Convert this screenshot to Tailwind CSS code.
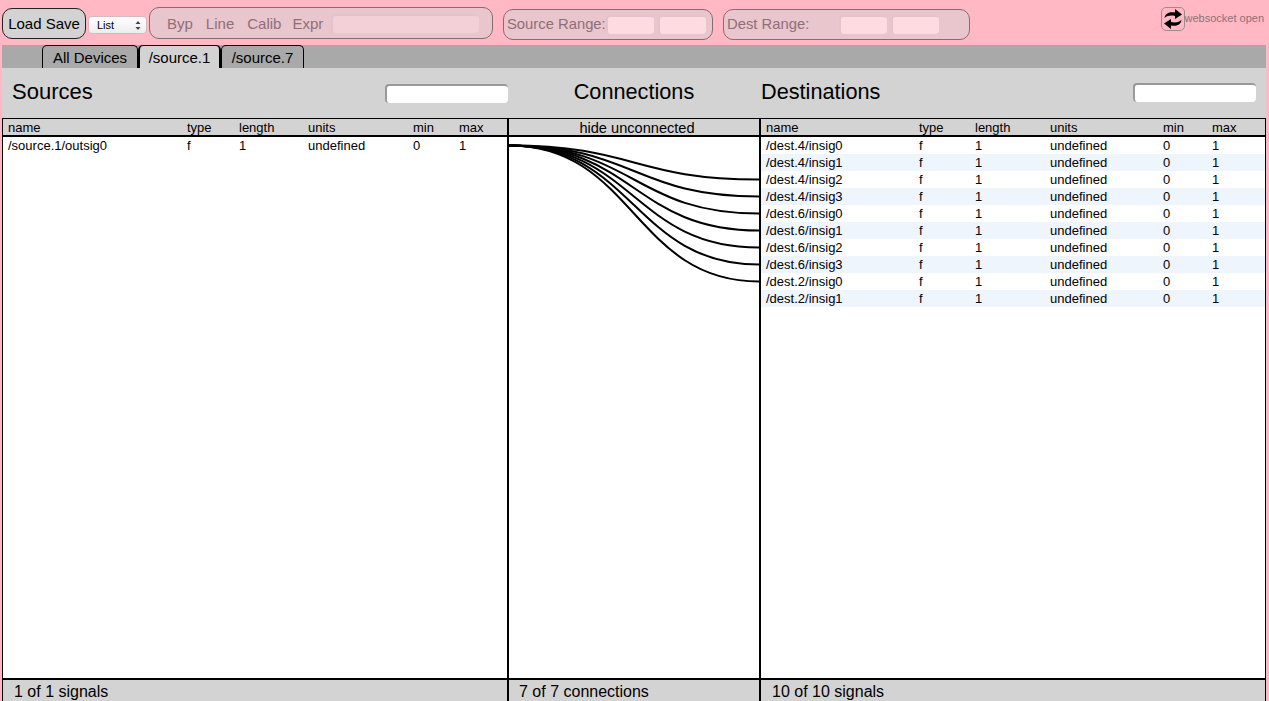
<!DOCTYPE html>
<html>
<head>
<meta charset="utf-8">
<script src="https://cdn.jsdelivr.net/npm/@tailwindcss/browser@4"></script>
</head>
<body class="h-[701px] overflow-hidden bg-[#ffb8c4] font-['Liberation_Sans',Arial,sans-serif] text-black">
<div class="flex h-[45px] items-start pl-[2px] relative">
  <div class="mt-[8px] flex h-[31px] w-[84px] items-center justify-center rounded-[10px] border border-[#222] bg-[#d3d3d3] pt-[1px] text-[15px]">Load Save</div>
  <div class="ml-[2px] mt-[16px] flex h-[18px] w-[59px] items-center justify-between rounded-[4px] border border-[#d9b9be] bg-gradient-to-b from-white to-[#eeeeee] pl-[8px] pr-[5px] text-[11px]">
    <span>List</span>
    <svg width="6" height="11" viewBox="0 0 6 11"><path d="M3 1 L5.5 4 H0.5 Z M3 10 L5.5 7 H0.5 Z" fill="#444"/></svg>
  </div>
  <div class="ml-[2px] mt-[7px] flex h-[32px] w-[344px] items-center rounded-[10px] border border-[#8a6a72] bg-[#e9c5cd] pl-[17px] text-[15px] text-[#8f6f78]">
    <span class="mt-[2px]">Byp</span><span class="ml-[13px] mt-[2px]">Line</span><span class="ml-[13px] mt-[2px]">Calib</span><span class="ml-[11px] mt-[2px]">Expr</span>
    <div class="ml-[8px] h-[19px] w-[148px] rounded-[4px] border-t-2 border-l-2 border-[#e6c3cb] bg-[#f3cfd7]"></div>
  </div>
  <div class="ml-[10px] mt-[9px] flex h-[31px] w-[210px] items-center rounded-[10px] border border-[#8a6a72] bg-[#e9c5cd] pl-[3px] text-[14.8px] text-[#8f6f78]">
    <span class="w-[99px]">Source Range:</span>
    <div class="h-[19px] w-[48px] rounded-[4px] border-t-2 border-l-2 border-[#e6c3cb] bg-[#fddbe1]"></div>
    <div class="ml-[4px] h-[19px] w-[48px] rounded-[4px] border-t-2 border-l-2 border-[#e6c3cb] bg-[#fddbe1]"></div>
  </div>
  <div class="ml-[10px] mt-[9px] flex h-[31px] w-[247px] items-center rounded-[10px] border border-[#8a6a72] bg-[#e9c5cd] pl-[3px] text-[14.8px] text-[#8f6f78]">
    <span class="w-[112px]">Dest Range:</span>
    <div class="h-[19px] w-[48px] rounded-[4px] border-t-2 border-l-2 border-[#e6c3cb] bg-[#fddbe1]"></div>
    <div class="ml-[4px] h-[19px] w-[48px] rounded-[4px] border-t-2 border-l-2 border-[#e6c3cb] bg-[#fddbe1]"></div>
  </div>
  <div class="ml-auto mr-[5px] mt-[7px] flex items-start">
    <div class="flex h-[24px] w-[24px] items-center justify-center rounded-[5px] border border-[#a08a8e]">
      <svg width="22" height="22" viewBox="0 0 22 22"><path d="M2.5 10 C3 5 8 3.5 13 4.5 L13 1 L20 6.5 L13 11 L13 8 C9 7 5.5 7.5 2.5 10 Z" fill="#000"/><path d="M19.5 12 C19 17 14 18.5 9 17.5 L9 21 L2 15.5 L9 11 L9 14 C13 15 16.5 14.5 19.5 12 Z" fill="#000"/></svg>
    </div>
    <span class="mt-[4px] text-[11px] leading-[14px] text-[#8f6f78]">websocket open</span>
  </div>
</div>

<div class="mx-[2px] w-[1264px] bg-[#d3d3d3]">
  <div class="flex h-[23px] items-end bg-[#a9a9a9] pl-[40px]">
    <div class="flex h-[23px] w-[96px] items-center justify-center rounded-t-[5px] border border-b-0 border-black bg-[#a9a9a9] pt-[2px] text-[15px]">All Devices</div>
    <div class="flex h-[23px] w-[83px] items-center justify-center rounded-t-[5px] border-x-2 border-t border-black bg-[#d3d3d3] pt-[2px] text-[15px]">/source.1</div>
    <div class="flex h-[23px] w-[83px] items-center justify-center rounded-t-[5px] border border-b-0 border-black bg-[#a9a9a9] pt-[2px] text-[15px]">/source.7</div>
  </div>
  <div class="grid h-[50px] grid-cols-[506px_252px_506px] items-center">
    <div class="flex items-center justify-between pl-[10px] pr-0">
      <span class="mb-[4px] text-[22px]">Sources</span>
      <div class="h-[19px] w-[123px] rounded-[4px] border-t-2 border-l-2 border-[#999] bg-white"></div>
    </div>
    <div class="mb-[2px] text-center text-[21.7px]">Connections</div>
    <div class="flex items-center justify-between pl-[1px] pr-[10px]">
      <span class="mb-[2px] text-[21.7px]">Destinations</span>
      <div class="h-[19px] w-[123px] rounded-[4px] border-t-2 border-l-2 border-[#999] bg-white"></div>
    </div>
  </div>
  <div class="grid h-[583px] grid-cols-[505px_252px_507px] border-t border-black bg-white text-[13px] leading-[17px]">
    <div class="flex flex-col border-l border-black">
      <div class="grid h-[16px] shrink-0 grid-cols-[179px_52px_69px_105px_46px_1fr] border-b-2 border-black bg-[#d3d3d3] pl-[5px] box-content">
        <span>name</span><span>type</span><span>length</span><span>units</span><span>min</span><span>max</span>
      </div>
      <div class="grid h-[17px] grid-cols-[179px_52px_69px_105px_46px_1fr] pl-[5px]">
        <span>/source.1/outsig0</span><span>f</span><span>1</span><span>undefined</span><span>0</span><span>1</span>
      </div>
      <div class="flex-1"></div>
      <div class="h-[23px] border-t-2 border-black bg-[#d3d3d3] pl-[11px] pt-[3px] text-[16px]">1 of 1 signals</div>
    </div>
    <div class="flex flex-col border-l-2 border-black">
      <div class="h-[16px] shrink-0 border-b-2 border-black bg-[#d3d3d3] pl-[6px] text-center text-[14.6px] leading-[19px] box-content">hide unconnected</div>
      <svg class="flex-1" width="250" height="541" viewBox="0 0 250 541" fill="none" stroke="#000" stroke-width="2">
        <path d="M0 8.5 C125 8.5 125 42.5 250 42.5"/>
        <path d="M0 8.5 C125 8.5 125 59.5 250 59.5"/>
        <path d="M0 8.5 C125 8.5 125 76.5 250 76.5"/>
        <path d="M0 8.5 C125 8.5 125 93.5 250 93.5"/>
        <path d="M0 8.5 C125 8.5 125 110.5 250 110.5"/>
        <path d="M0 8.5 C125 8.5 125 127.5 250 127.5"/>
        <path d="M0 8.5 C125 8.5 125 144.5 250 144.5"/>
      </svg>
      <div class="h-[23px] shrink-0 border-t-2 border-black bg-[#d3d3d3] pl-[10px] pt-[3px] text-[16px]">7 of 7 connections</div>
    </div>
    <div class="flex flex-col border-l-2 border-r border-black">
      <div class="grid h-[16px] shrink-0 grid-cols-[153px_56px_75px_113px_49px_1fr] border-b-2 border-black bg-[#d3d3d3] pl-[5px] box-content">
        <span>name</span><span>type</span><span>length</span><span>units</span><span>min</span><span>max</span>
      </div>
      <div class="grid h-[17px] grid-cols-[153px_56px_75px_113px_49px_1fr] pl-[5px]"><span>/dest.4/insig0</span><span>f</span><span>1</span><span>undefined</span><span>0</span><span>1</span></div>
      <div class="grid h-[17px] grid-cols-[153px_56px_75px_113px_49px_1fr] bg-[#eef5fd] pl-[5px]"><span>/dest.4/insig1</span><span>f</span><span>1</span><span>undefined</span><span>0</span><span>1</span></div>
      <div class="grid h-[17px] grid-cols-[153px_56px_75px_113px_49px_1fr] pl-[5px]"><span>/dest.4/insig2</span><span>f</span><span>1</span><span>undefined</span><span>0</span><span>1</span></div>
      <div class="grid h-[17px] grid-cols-[153px_56px_75px_113px_49px_1fr] bg-[#eef5fd] pl-[5px]"><span>/dest.4/insig3</span><span>f</span><span>1</span><span>undefined</span><span>0</span><span>1</span></div>
      <div class="grid h-[17px] grid-cols-[153px_56px_75px_113px_49px_1fr] pl-[5px]"><span>/dest.6/insig0</span><span>f</span><span>1</span><span>undefined</span><span>0</span><span>1</span></div>
      <div class="grid h-[17px] grid-cols-[153px_56px_75px_113px_49px_1fr] bg-[#eef5fd] pl-[5px]"><span>/dest.6/insig1</span><span>f</span><span>1</span><span>undefined</span><span>0</span><span>1</span></div>
      <div class="grid h-[17px] grid-cols-[153px_56px_75px_113px_49px_1fr] pl-[5px]"><span>/dest.6/insig2</span><span>f</span><span>1</span><span>undefined</span><span>0</span><span>1</span></div>
      <div class="grid h-[17px] grid-cols-[153px_56px_75px_113px_49px_1fr] bg-[#eef5fd] pl-[5px]"><span>/dest.6/insig3</span><span>f</span><span>1</span><span>undefined</span><span>0</span><span>1</span></div>
      <div class="grid h-[17px] grid-cols-[153px_56px_75px_113px_49px_1fr] pl-[5px]"><span>/dest.2/insig0</span><span>f</span><span>1</span><span>undefined</span><span>0</span><span>1</span></div>
      <div class="grid h-[17px] grid-cols-[153px_56px_75px_113px_49px_1fr] bg-[#eef5fd] pl-[5px]"><span>/dest.2/insig1</span><span>f</span><span>1</span><span>undefined</span><span>0</span><span>1</span></div>
      <div class="flex-1"></div>
      <div class="h-[23px] border-t-2 border-black bg-[#d3d3d3] pl-[11px] pt-[3px] text-[16px]">10 of 10 signals</div>
    </div>
  </div>
</div>
</body>
</html>
